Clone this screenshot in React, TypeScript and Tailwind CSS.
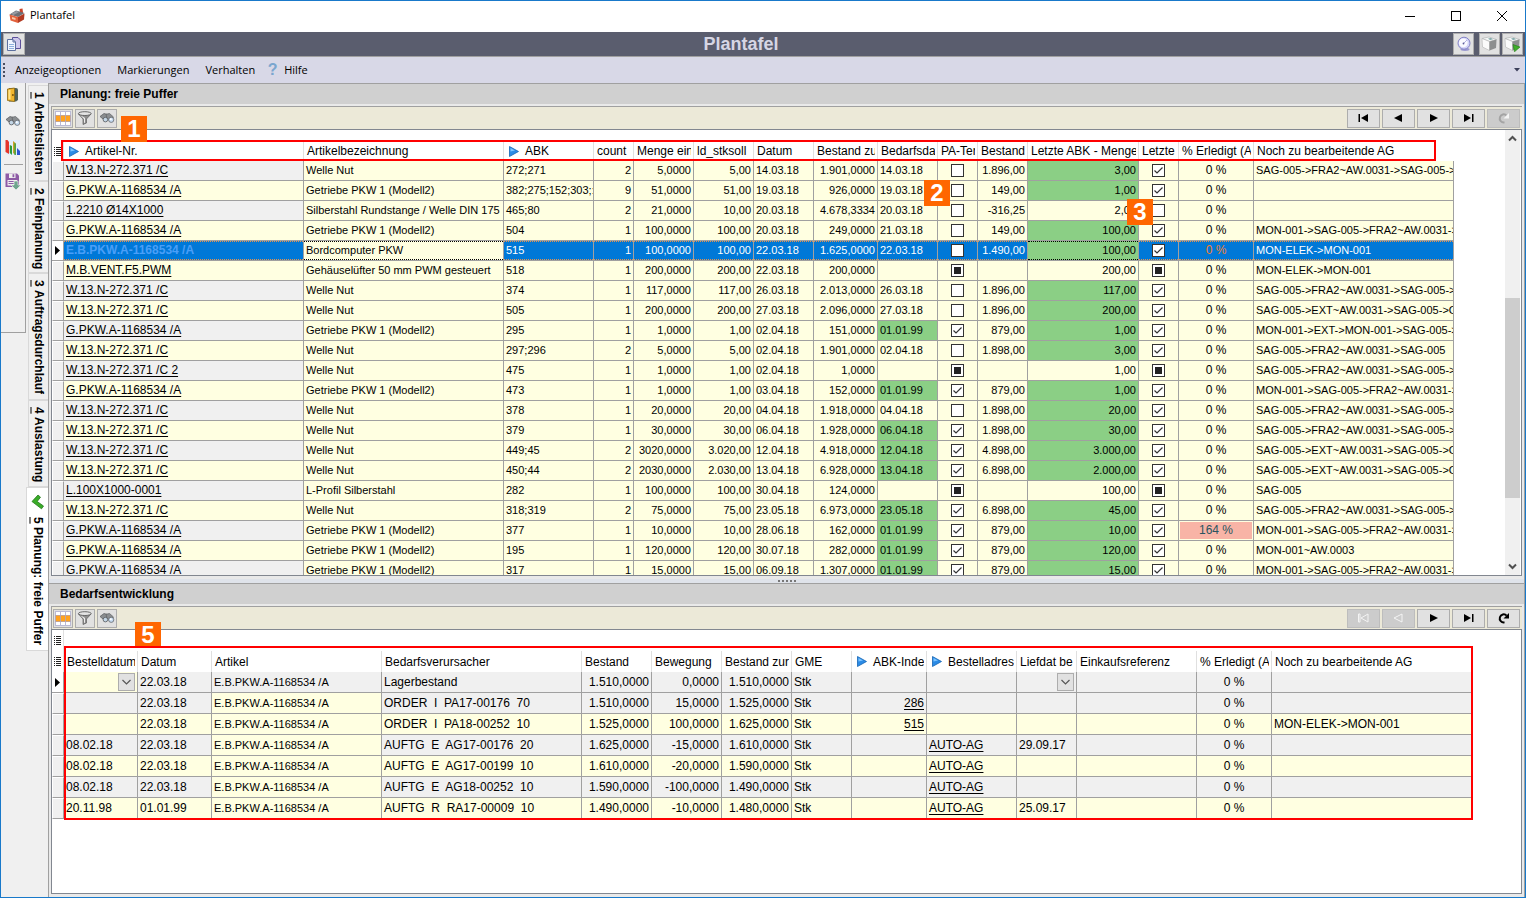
import type { ReactNode } from "react";
import clsx from "clsx";

type CheckState = "on" | "off" | "mixed";

type BufferRow = {
  item: string;
  name: string;
  abk: string;
  count: string;
  unitQty: string;
  target: string;
  date: string;
  stockAt: string;
  demand: string;
  demandHit?: boolean;
  pa: CheckState;
  stock: string;
  lastQty: string;
  last: CheckState;
  done: string;
  ops: string;
};

const NUT = "W.13.N-272.371 /C";
const GEAR = "G.PKW.A-1168534 /A";
const GEAR_NAME = "Getriebe PKW 1 (Modell2)";
const FRA = "SAG-005->FRA2~AW.0031->SAG-005->";
const EXT = "SAG-005->EXT~AW.0031->SAG-005->G";
const MON = "MON-001->SAG-005->FRA2~AW.0031->";

const BUFFER_ROWS: BufferRow[] = [
  { item: NUT, name: "Welle Nut", abk: "272;271", count: "2", unitQty: "5,0000", target: "5,00", date: "14.03.18", stockAt: "1.901,0000", demand: "14.03.18", pa: "off", stock: "1.896,00", lastQty: "3,00", last: "on", done: "0 %", ops: FRA },
  { item: GEAR, name: GEAR_NAME, abk: "382;275;152;303;:", count: "9", unitQty: "51,0000", target: "51,00", date: "19.03.18", stockAt: "926,0000", demand: "19.03.18", pa: "off", stock: "149,00", lastQty: "1,00", last: "on", done: "0 %", ops: "" },
  { item: "1.2210 Ø14X1000", name: "Silberstahl Rundstange / Welle DIN 175", abk: "465;80", count: "2", unitQty: "21,0000", target: "10,00", date: "20.03.18", stockAt: "4.678,3334", demand: "20.03.18", pa: "off", stock: "-316,25", lastQty: "2,00", last: "off", done: "0 %", ops: "" },
  { item: GEAR, name: GEAR_NAME, abk: "504", count: "1", unitQty: "100,0000", target: "100,00", date: "20.03.18", stockAt: "249,0000", demand: "21.03.18", pa: "off", stock: "149,00", lastQty: "100,00", last: "on", done: "0 %", ops: MON },
  { item: "E.B.PKW.A-1168534 /A", name: "Bordcomputer PKW", abk: "515", count: "1", unitQty: "100,0000", target: "100,00", date: "22.03.18", stockAt: "1.625,0000", demand: "22.03.18", pa: "off", stock: "1.490,00", lastQty: "100,00", last: "on", done: "0 %", ops: "MON-ELEK->MON-001" },
  { item: "M.B.VENT.F5.PWM", name: "Gehäuselüfter 50 mm PWM gesteuert", abk: "518", count: "1", unitQty: "200,0000", target: "200,00", date: "22.03.18", stockAt: "200,0000", demand: "", pa: "mixed", stock: "", lastQty: "200,00", last: "mixed", done: "0 %", ops: "MON-ELEK->MON-001" },
  { item: NUT, name: "Welle Nut", abk: "374", count: "1", unitQty: "117,0000", target: "117,00", date: "26.03.18", stockAt: "2.013,0000", demand: "26.03.18", pa: "off", stock: "1.896,00", lastQty: "117,00", last: "on", done: "0 %", ops: FRA },
  { item: NUT, name: "Welle Nut", abk: "505", count: "1", unitQty: "200,0000", target: "200,00", date: "27.03.18", stockAt: "2.096,0000", demand: "27.03.18", pa: "off", stock: "1.896,00", lastQty: "200,00", last: "on", done: "0 %", ops: EXT },
  { item: GEAR, name: GEAR_NAME, abk: "295", count: "1", unitQty: "1,0000", target: "1,00", date: "02.04.18", stockAt: "151,0000", demand: "01.01.99", demandHit: true, pa: "on", stock: "879,00", lastQty: "1,00", last: "on", done: "0 %", ops: "MON-001->EXT->MON-001->SAG-005->" },
  { item: NUT, name: "Welle Nut", abk: "297;296", count: "2", unitQty: "5,0000", target: "5,00", date: "02.04.18", stockAt: "1.901,0000", demand: "02.04.18", pa: "off", stock: "1.898,00", lastQty: "3,00", last: "on", done: "0 %", ops: "SAG-005->FRA2~AW.0031->SAG-005" },
  { item: "W.13.N-272.371 /C 2", name: "Welle Nut", abk: "475", count: "1", unitQty: "1,0000", target: "1,00", date: "02.04.18", stockAt: "1,0000", demand: "", pa: "mixed", stock: "", lastQty: "1,00", last: "mixed", done: "0 %", ops: FRA },
  { item: GEAR, name: GEAR_NAME, abk: "473", count: "1", unitQty: "1,0000", target: "1,00", date: "03.04.18", stockAt: "152,0000", demand: "01.01.99", demandHit: true, pa: "on", stock: "879,00", lastQty: "1,00", last: "on", done: "0 %", ops: MON },
  { item: NUT, name: "Welle Nut", abk: "378", count: "1", unitQty: "20,0000", target: "20,00", date: "04.04.18", stockAt: "1.918,0000", demand: "04.04.18", pa: "off", stock: "1.898,00", lastQty: "20,00", last: "on", done: "0 %", ops: FRA },
  { item: NUT, name: "Welle Nut", abk: "379", count: "1", unitQty: "30,0000", target: "30,00", date: "06.04.18", stockAt: "1.928,0000", demand: "06.04.18", demandHit: true, pa: "on", stock: "1.898,00", lastQty: "30,00", last: "on", done: "0 %", ops: FRA },
  { item: NUT, name: "Welle Nut", abk: "449;45", count: "2", unitQty: "3020,0000", target: "3.020,00", date: "12.04.18", stockAt: "4.918,0000", demand: "12.04.18", demandHit: true, pa: "on", stock: "4.898,00", lastQty: "3.000,00", last: "on", done: "0 %", ops: EXT },
  { item: NUT, name: "Welle Nut", abk: "450;44", count: "2", unitQty: "2030,0000", target: "2.030,00", date: "13.04.18", stockAt: "6.928,0000", demand: "13.04.18", demandHit: true, pa: "on", stock: "6.898,00", lastQty: "2.000,00", last: "on", done: "0 %", ops: EXT },
  { item: "L.100X1000-0001", name: "L-Profil Silberstahl", abk: "282", count: "1", unitQty: "100,0000", target: "100,00", date: "30.04.18", stockAt: "124,0000", demand: "", pa: "mixed", stock: "", lastQty: "100,00", last: "mixed", done: "0 %", ops: "SAG-005" },
  { item: NUT, name: "Welle Nut", abk: "318;319", count: "2", unitQty: "75,0000", target: "75,00", date: "23.05.18", stockAt: "6.973,0000", demand: "23.05.18", demandHit: true, pa: "on", stock: "6.898,00", lastQty: "45,00", last: "on", done: "0 %", ops: FRA },
  { item: GEAR, name: GEAR_NAME, abk: "377", count: "1", unitQty: "10,0000", target: "10,00", date: "28.06.18", stockAt: "162,0000", demand: "01.01.99", demandHit: true, pa: "on", stock: "879,00", lastQty: "10,00", last: "on", done: "164 %", ops: MON },
  { item: GEAR, name: GEAR_NAME, abk: "195", count: "1", unitQty: "120,0000", target: "120,00", date: "30.07.18", stockAt: "282,0000", demand: "01.01.99", demandHit: true, pa: "on", stock: "879,00", lastQty: "120,00", last: "on", done: "0 %", ops: "MON-001~AW.0003" },
  { item: GEAR, name: GEAR_NAME, abk: "317", count: "1", unitQty: "15,0000", target: "15,00", date: "06.09.18", stockAt: "1.307,0000", demand: "01.01.99", demandHit: true, pa: "on", stock: "879,00", lastQty: "15,00", last: "on", done: "0 %", ops: MON },
];

type Column = { label: string; width: string; arrow?: boolean };

const BUFFER_COLUMNS: Column[] = [
  { label: "Artikel-Nr.", width: "w-[240px]", arrow: true },
  { label: "Artikelbezeichnung", width: "w-[200px]" },
  { label: "ABK", width: "w-[90px]", arrow: true },
  { label: "count", width: "w-[40px]" },
  { label: "Menge ein", width: "w-[60px]" },
  { label: "ld_stksoll", width: "w-[60px]" },
  { label: "Datum", width: "w-[60px]" },
  { label: "Bestand zu", width: "w-[64px]" },
  { label: "Bedarfsda", width: "w-[60px]" },
  { label: "PA-Ter", width: "w-[40px]" },
  { label: "Bestand", width: "w-[50px]" },
  { label: "Letzte ABK - Menge", width: "w-[111px]" },
  { label: "Letzte", width: "w-[40px]" },
  { label: "% Erledigt (A", width: "w-[75px]" },
  { label: "Noch zu bearbeitende AG", width: "w-[200px]" },
];

const DEMAND_COLUMNS: Column[] = [
  { label: "Bestelldatum", width: "w-[74px]" },
  { label: "Datum", width: "w-[74px]" },
  { label: "Artikel", width: "w-[170px]" },
  { label: "Bedarfsverursacher", width: "w-[200px]" },
  { label: "Bestand", width: "w-[70px]" },
  { label: "Bewegung", width: "w-[70px]" },
  { label: "Bestand zur", width: "w-[70px]" },
  { label: "GME", width: "w-[60px]" },
  { label: "ABK-Inde", width: "w-[75px]", arrow: true },
  { label: "Bestelladres", width: "w-[90px]", arrow: true },
  { label: "Liefdat be", width: "w-[60px]" },
  { label: "Einkaufsreferenz", width: "w-[120px]" },
  { label: "% Erledigt (A", width: "w-[75px]" },
  { label: "Noch zu bearbeitende AG", width: "w-[200px]" },
];

type DemandRow = {
  ordered: string;
  date: string;
  cause: string;
  before: string;
  move: string;
  after: string;
  abk?: string;
  address?: string;
  delivery?: string;
  ops?: string;
  gray?: boolean;
};

const DEMAND_ROWS: DemandRow[] = [
  { ordered: "", date: "22.03.18", cause: "Lagerbestand", before: "1.510,0000", move: "0,0000", after: "1.510,0000", gray: true },
  { ordered: "", date: "22.03.18", cause: "ORDER  I  PA17-00176  70", before: "1.510,0000", move: "15,0000", after: "1.525,0000", abk: "286", gray: true },
  { ordered: "", date: "22.03.18", cause: "ORDER  I  PA18-00252  10", before: "1.525,0000", move: "100,0000", after: "1.625,0000", abk: "515", ops: "MON-ELEK->MON-001" },
  { ordered: "08.02.18", date: "22.03.18", cause: "AUFTG  E  AG17-00176  20", before: "1.625,0000", move: "-15,0000", after: "1.610,0000", address: "AUTO-AG", delivery: "29.09.17", gray: true },
  { ordered: "08.02.18", date: "22.03.18", cause: "AUFTG  E  AG17-00199  10", before: "1.610,0000", move: "-20,0000", after: "1.590,0000", address: "AUTO-AG" },
  { ordered: "08.02.18", date: "22.03.18", cause: "AUFTG  E  AG18-00252  10", before: "1.590,0000", move: "-100,0000", after: "1.490,0000", address: "AUTO-AG", gray: true },
  { ordered: "20.11.98", date: "01.01.99", cause: "AUFTG  R  RA17-00009  10", before: "1.490,0000", move: "-10,0000", after: "1.480,0000", address: "AUTO-AG", delivery: "25.09.17" },
];

/* ---------- icons ---------- */

function PlayIcon() {
  return (
    <svg width="10" height="11" viewBox="0 0 10 11" className="shrink-0">
      <path d="M0.5 0.5 L9.5 5.5 L0.5 10.5 Z" fill="#2b8be6" stroke="#1464b4" strokeWidth="0.8" />
      <path d="M1.5 2 L6 4.6 L1.5 5.5 Z" fill="#7cc4ff" />
    </svg>
  );
}

function ListIcon() {
  return (
    <svg width="7" height="9" viewBox="0 0 7 9" shapeRendering="crispEdges">
      <path d="M0 0.5h1M2 0.5h5M0 2.5h1M2 2.5h5M0 4.5h1M2 4.5h5M0 6.5h1M2 6.5h5M0 8.5h1M2 8.5h5" stroke="#222" />
    </svg>
  );
}

function RowMarker() {
  return (
    <svg width="5" height="9" viewBox="0 0 5 9" className="mx-auto">
      <path d="M0 0 L5 4.5 L0 9 Z" fill="#000" />
    </svg>
  );
}

function FactoryIcon() {
  return (
    <svg width="16" height="16" viewBox="0 0 16 16">
      <path d="M10.5 1 L13.5 0.5 L14.2 6 L11 6 Z" fill="#c9442a" />
      <path d="M0.5 6.5 L7 2.5 L15.5 5 L9 9 Z" fill="#6d7077" />
      <path d="M2 5.8 L7.5 3 L10 4 L4.5 7 Z" fill="#979ba2" />
      <path d="M0.5 6.5 L9 9 L9 15 L1.5 12.5 Z" fill="#e2613c" />
      <path d="M9 9 L15.5 5.5 L15 11.5 L9 15 Z" fill="#b23a22" />
      <path d="M3 9 L6.5 10 L6.5 12 L3 11 Z" fill="#f9c9a8" />
    </svg>
  );
}

function PagesIcon() {
  return (
    <svg width="16" height="16" viewBox="0 0 16 16">
      <path d="M6.5 1.5 H12 L14.5 4 V12.5 H6.5 Z" fill="#cfc8ec" stroke="#5c4f9a" />
      <path d="M1.5 3.5 H7 L9.5 6 V14.5 H1.5 Z" fill="#f2f6ff" stroke="#5c6f9e" />
      <path d="M7 3.5 V6 H9.5" fill="none" stroke="#5c6f9e" />
      <path d="M3 8.5 H8 M3 10.5 H8 M3 12.5 H8" stroke="#8fb0dd" />
    </svg>
  );
}

function GlobeIcon() {
  return (
    <svg width="16" height="16" viewBox="0 0 16 16">
      <ellipse cx="9" cy="13.3" rx="4.5" ry="1.6" fill="#9a98cf" />
      <circle cx="8" cy="7.2" r="6" fill="#d3d4f8" stroke="#8583c6" />
      <circle cx="7.3" cy="6.8" r="4.4" fill="#fafaff" />
      <path d="M7.5 7.5 L11 4" stroke="#b3b2e0" />
      <circle cx="7.5" cy="7.5" r="0.9" fill="#5c5b98" />
    </svg>
  );
}

function CubeIcon({ green }: { green?: boolean }) {
  return (
    <svg width="17" height="16" viewBox="0 0 17 16">
      <path d="M1 2.5 L8 1 L15.5 3.5 L8.5 5.5 Z" fill="#f4f7f7" stroke="#a9adad" strokeWidth="0.6" />
      <path d="M1 2.5 L8.5 5.5 L8.5 14.5 L1.5 11 Z" fill="#fbfbfb" stroke="#b4b4b4" strokeWidth="0.6" />
      <path d="M8.5 5.5 L15.5 3.5 L15 12 L8.5 14.5 Z" fill="#8d8f8f" />
      <path d="M7 2.5 L10 2 L12 3.2 L9 4 Z" fill="#7fa8a8" />
      {green && <path d="M9 8.5 L16 11 L10.5 15.8 Z" fill="#3fae2a" stroke="#217a14" strokeWidth="0.6" />}
    </svg>
  );
}

function GridIcon() {
  return (
    <svg width="16" height="15" viewBox="0 0 16 15" shapeRendering="crispEdges">
      <rect width="16" height="15" fill="#fff" />
      <rect y="5" width="16" height="5" fill="#ffa21f" />
      <path d="M0 4.5H16 M0 10.5H16" stroke="#c9a487" />
      <path d="M0.5 0V15 M5.5 0V15 M10.5 0V15 M15.5 0V15 M0 14.5H16 M0 0.5H16" stroke="#a9a9c9" strokeOpacity="0.8" />
    </svg>
  );
}

function FunnelIcon() {
  return (
    <svg width="16" height="16" viewBox="0 0 16 16">
      <path d="M1.5 4 L6 9 V14.5 L9.5 13 V9 L14 4 Z" fill="#8e8e8e" stroke="#5e5e5e" strokeWidth="0.7" />
      <path d="M3 5 L7 9 V13 L8 12.6 V8 Z" fill="#efefef" />
      <ellipse cx="7.8" cy="3.6" rx="6.4" ry="1.9" fill="#e4e4e4" stroke="#5b5b5b" strokeWidth="0.9" />
    </svg>
  );
}

function BinocularsIcon() {
  return (
    <svg width="16" height="12" viewBox="0 0 16 12">
      <path d="M1 4.5 L5 1.5 L8.5 2.5 L7 8 L4 7 Z" fill="#8a8d90" stroke="#55585b" strokeWidth="0.7" />
      <path d="M7 2.3 L10.5 1.5 L14.5 5 L11 9.5 L8 6 Z" fill="#8b8e91" stroke="#606366" strokeWidth="0.7" />
      <circle cx="6.4" cy="7.6" r="2.3" fill="#c3d6e6" stroke="#54585c" strokeWidth="0.8" />
      <circle cx="12.2" cy="7.8" r="2.6" fill="#c6dcf2" stroke="#64686c" strokeWidth="0.8" />
      <circle cx="11.8" cy="7.2" r="1" fill="#fff" />
    </svg>
  );
}

function DoorIcon() {
  return (
    <svg width="14" height="16" viewBox="0 0 14 16">
      <path d="M3 1 H10 Q12 1 12 3 V13 L10 14.5 H3 Z" fill="#4f6158" />
      <path d="M1.5 2 L8.5 1 V14.5 L1.5 13.5 Z" fill="#f0b62e" stroke="#8f6912" strokeWidth="0.8" />
      <path d="M2.5 3 L4.5 2.8 V12.5 L2.5 12.2 Z" fill="#ffe28a" />
      <circle cx="6.9" cy="8" r="0.9" fill="#6b4c06" />
    </svg>
  );
}

function ChartIcon() {
  return (
    <svg width="16" height="17" viewBox="0 0 16 17">
      <rect x="1" y="1" width="14" height="15" fill="#e3eefb" />
      <path d="M0.5 1 H2.5 L4 3 V15 L0.5 13 Z" fill="#e5352b" />
      <path d="M4.8 6 L7 7 V16 L4.8 14 Z" fill="#2c9c3c" />
      <path d="M8 2 L10.5 4 V16 L8 14 Z" fill="#c9a32a" />
      <path d="M9.5 4 L10.8 4.5 V16 H9.5 Z" fill="#2c9c3c" />
      <path d="M12 9 L15 12 V16 H12 Z" fill="#2f55d0" />
    </svg>
  );
}

function SaveIcon() {
  return (
    <svg width="16" height="17" viewBox="0 0 16 17">
      <path d="M0.5 0.5 H12 L14 2.5 V14 H0.5 Z" fill="#8e5ba6" />
      <rect x="4" y="0.5" width="6.5" height="4.5" fill="#f0f0f0" />
      <rect x="7.5" y="1.2" width="1.8" height="3" fill="#8e5ba6" />
      <rect x="2.5" y="7" width="9.5" height="5.5" fill="#f0f0f0" />
      <path d="M3.5 8.5 H11 M3.5 10.5 H11" stroke="#8e5ba6" />
      <path d="M9 8 H13 V12 H16 L11 17 L6 12 H9 Z" fill="#6fa58e" stroke="#f0f0f0" strokeWidth="0.7" />
    </svg>
  );
}

function TabMark() {
  return (
    <svg width="14" height="16" viewBox="0 0 14 16">
      <path d="M1 7.5 L7 1 L9.5 3.2 L6.2 7.5 L12.5 12 L10.5 14.8 Z" fill="#3aac28" stroke="#23791a" strokeWidth="0.8" />
    </svg>
  );
}

const NAV_PATHS = {
  first: "M0.5 1 H2 V9 H0.5 Z M10 1 V9 L3 5 Z",
  prev: "M9 1 V9 L1 5 Z",
  next: "M2 1 V9 L10 5 Z",
  last: "M9 1 H10.5 V9 H9 Z M1 1 V9 L8 5 Z",
};

type NavKind = keyof typeof NAV_PATHS | "reload";

const NAV_LABELS: Record<NavKind, string> = {
  first: "Erster Datensatz",
  prev: "Vorheriger Datensatz",
  next: "Nächster Datensatz",
  last: "Letzter Datensatz",
  reload: "Aktualisieren",
};

function NavButton({ kind, disabled }: { kind: NavKind; disabled?: boolean }) {
  const ink = disabled ? "#f4f4f4" : "#000";
  return (
    <button
      aria-label={NAV_LABELS[kind]}
      disabled={disabled}
      className={clsx(
        "grid h-[19px] w-[33px] place-items-center border",
        disabled ? "border-[#bdbdbd] bg-[#cccccc]" : "border-[#adadad] bg-[#e1e1e1]",
      )}
    >
      {kind === "reload" ? (
        <svg width="12" height="12" viewBox="0 0 12 12" fill="none">
          <path d="M6.5 10.3 A4 4 0 1 1 8.6 3.6" stroke={disabled ? "#a4a4a4" : ink} strokeWidth="2" />
          <path d="M11 1 V6.5 H5.5 Z" fill={ink} />
        </svg>
      ) : (
        <svg width="11" height="10" viewBox="0 0 11 10">
          <path d={NAV_PATHS[kind]} fill={disabled ? "#cccccc" : ink} stroke={disabled ? ink : "none"} />
        </svg>
      )}
    </button>
  );
}

/* ---------- grid parts ---------- */

function CheckCell({ state, label }: { state: CheckState; label: string }) {
  return (
    <span className="grid h-full place-items-center">
      <input
        type="checkbox"
        aria-label={label}
        defaultChecked={state === "on"}
        ref={(el) => {
          if (el) el.indeterminate = state === "mixed";
        }}
        className="h-[13px] w-[13px] appearance-none border border-[#333] bg-white [grid-area:1/1]"
      />
      {state === "on" && (
        <svg width="11" height="11" viewBox="0 0 11 11" className="pointer-events-none [grid-area:1/1]">
          <path d="M1.5 5.5 L4 8 L9.5 2.5" fill="none" stroke="#333" strokeWidth="1.2" />
        </svg>
      )}
      {state === "mixed" && <span className="pointer-events-none h-[7px] w-[7px] bg-[#222] [grid-area:1/1]" />}
    </span>
  );
}

function Cell({
  children,
  bg = "bg-[#ffffe1]",
  align = "text-left",
  inner,
  tall,
}: {
  children?: ReactNode;
  bg?: string;
  align?: string;
  inner?: string;
  tall?: boolean;
}) {
  return (
    <td className={clsx("border-r border-b border-[#a0a0a0] p-0", bg, align)}>
      <div
        className={clsx(
          "overflow-hidden pr-0.5 pl-0.5 whitespace-pre",
          tall ? "h-5 leading-5" : "h-[19px]",
          inner ?? (tall ? "" : "leading-[19px]"),
        )}
      >
        {children}
      </div>
    </td>
  );
}

function RowHead({ current, tall }: { current?: boolean; tall?: boolean }) {
  return (
    <th
      scope="row"
      className={clsx(
        "border-r border-b border-[#a0a0a0] p-0",
        tall ? "h-[21px]" : "h-5",
        current ? "bg-white" : "border-t border-l border-t-white border-l-white bg-[#f0f0f0]",
      )}
    >
      {current && <RowMarker />}
    </th>
  );
}

function GridHead({ columns, height }: { columns: Column[]; height: string }) {
  return (
    <>
      <colgroup>
        <col className="w-3" />
        {columns.map((c) => (
          <col key={c.label} className={c.width} />
        ))}
      </colgroup>
      <thead>
        <tr className={height}>
          <th className="border-r border-[#e0e0e0] p-0">
            <span className="grid place-items-center">
              <ListIcon />
            </span>
          </th>
          {columns.map((c) => (
            <th
              key={c.label}
              scope="col"
              className="border-r border-[#e0e0e0] p-0 text-left text-xs font-normal last:border-transparent"
            >
              <div
                className={clsx(
                  "flex items-center overflow-hidden border-r-2 border-transparent whitespace-nowrap",
                  c.arrow ? "gap-1.5 pl-[5px]" : "pl-[3px]",
                )}
              >
                {c.arrow && <PlayIcon />}
                {c.label}
              </div>
            </th>
          ))}
        </tr>
      </thead>
    </>
  );
}

function BufferTable() {
  return (
    <table className="w-[1402px] table-fixed border-separate border-spacing-0 text-[11px]">
      <GridHead columns={BUFFER_COLUMNS} height="h-5" />
      <tbody>
        {BUFFER_ROWS.map((r, i) => {
          const current = r.abk === "515";
          const plain = current ? "bg-[#0078d7] text-white" : "bg-[#ffffe1]";
          const edge = current ? "border-y border-dotted border-y-[#e8924a] leading-[17px]" : undefined;
          const focusEdge = current ? "border-y border-dotted border-y-black leading-[17px]" : undefined;
          return (
            <tr key={i}>
              <RowHead current={current} />
              <Cell bg={current ? "bg-[#0078d7]" : i % 2 ? "bg-[#ffffe1]" : "bg-[#f0f0f0]"} inner={edge}>
                <a
                  href="#"
                  className={clsx(
                    "text-xs",
                    current ? "leading-[17px] font-bold text-[#4a9ff8]" : "leading-[19px] underline underline-offset-2",
                  )}
                >
                  {r.item}
                </a>
              </Cell>
              <Cell inner={focusEdge}>{r.name}</Cell>
              <Cell bg={plain} inner={edge}>{r.abk}</Cell>
              <Cell bg={plain} inner={edge} align="text-right">{r.count}</Cell>
              <Cell bg={plain} inner={edge} align="text-right">{r.unitQty}</Cell>
              <Cell bg={plain} inner={edge} align="text-right">{r.target}</Cell>
              <Cell bg={plain} inner={edge}>{r.date}</Cell>
              <Cell bg={plain} inner={edge} align="text-right">{r.stockAt}</Cell>
              <Cell bg={r.demandHit ? "bg-[#8bcf85]" : plain} inner={edge}>{r.demand}</Cell>
              <Cell bg={plain} inner={edge}>
                <CheckCell state={r.pa} label="PA-Termin" />
              </Cell>
              <Cell bg={plain} inner={edge} align="text-right">{r.stock}</Cell>
              <Cell bg={r.stock && r.last !== "off" ? "bg-[#8bcf85]" : "bg-[#ffffe1]"} inner={focusEdge} align="text-right">
                {r.lastQty}
              </Cell>
              <Cell bg={plain} inner={edge}>
                <CheckCell state={r.last} label="Letzte" />
              </Cell>
              {r.done === "164 %" ? (
                <td className="border-r border-b border-[#a0a0a0] bg-[#ffffe1] p-px">
                  <div className="h-[17px] bg-[#f8b4a6] text-center text-xs leading-[17px] text-[#2a5560]">{r.done}</div>
                </td>
              ) : (
                <Cell bg={plain} inner={edge} align="text-center">
                  <span className={clsx("text-xs", current ? "leading-[17px] text-[#f08030]" : "leading-[19px]")}>{r.done}</span>
                </Cell>
              )}
              <Cell bg={plain} inner={edge}>{r.ops}</Cell>
            </tr>
          );
        })}
      </tbody>
    </table>
  );
}

function DatePick({ label }: { label: string }) {
  return (
    <span className="flex h-full items-center justify-end">
      <select aria-label={label} className="h-[18px] w-[17px] appearance-none border border-[#adadad] bg-[#e1e1e1]" />
      <svg width="17" height="10" viewBox="0 0 17 10" className="pointer-events-none -ml-[17px]">
        <path d="M4.5 3 L8.5 7 L12.5 3" fill="none" stroke="#555" strokeWidth="1.2" />
      </svg>
    </span>
  );
}

function DemandTable() {
  return (
    <table className="w-[1420px] table-fixed border-separate border-spacing-0 text-xs">
      <GridHead columns={DEMAND_COLUMNS} height="h-[21px]" />
      <tbody>
        {DEMAND_ROWS.map((r, i) => {
          const bg = r.gray ? "bg-[#f0f0f0]" : "bg-[#ffffe1]";
          return (
            <tr key={r.cause}>
              <RowHead tall current={i === 0} />
              <Cell tall bg={i === 0 ? "bg-[#ffffe1]" : bg}>{i === 0 ? <DatePick label="Bestelldatum" /> : r.ordered}</Cell>
              <Cell tall bg={bg}>{r.date}</Cell>
              <Cell tall bg={i === 0 ? bg : "bg-[#ffffe1]"}>
                <span className="text-[11px]">E.B.PKW.A-1168534 /A</span>
              </Cell>
              <Cell tall bg={bg}>{r.cause}</Cell>
              <Cell tall bg={bg} align="text-right">{r.before}</Cell>
              <Cell tall bg={bg} align="text-right">{r.move}</Cell>
              <Cell tall bg={bg} align="text-right">{r.after}</Cell>
              <Cell tall bg={bg}>Stk</Cell>
              <Cell tall bg={bg} align="text-right">
                {r.abk && <a href="#" className="underline underline-offset-2">{r.abk}</a>}
              </Cell>
              <Cell tall bg={bg}>
                {r.address && <a href="#" className="underline underline-offset-2">{r.address}</a>}
              </Cell>
              <Cell tall bg={bg}>{i === 0 ? <DatePick label="Liefdat" /> : r.delivery}</Cell>
              <Cell tall bg={bg} />
              <Cell tall bg={bg} align="text-center">0 %</Cell>
              <Cell tall bg={bg}>{r.ops}</Cell>
            </tr>
          );
        })}
      </tbody>
    </table>
  );
}

function Badge({ children, className }: { children: ReactNode; className: string }) {
  return (
    <span className={clsx("absolute h-[26px] w-[26px] bg-[#ff6600] text-center text-2xl leading-[26px] font-bold text-white", className)}>
      {children}
    </span>
  );
}

/* ---------- frame ---------- */

function ToolButton({ label, children }: { label: string; children: ReactNode }) {
  return (
    <button aria-label={label} className="grid h-[19px] w-5 place-items-center border border-[#adadad] bg-[#e1e1e1]">
      {children}
    </button>
  );
}

function PanelHead({ title, disabled }: { title: string; disabled: NavKind[] }) {
  const kinds: NavKind[] = ["first", "prev", "next", "last", "reload"];
  return (
    <>
      <h2 className="-mx-0.5 h-5 bg-[#d0d0d0] pl-[11px] text-xs leading-5 font-bold">{title}</h2>
      <div className="mt-0.5 flex h-[23px] items-center gap-0.5 border-t border-l border-[#a0a0a0] bg-[#ece9d8] px-px">
        <ToolButton label="Spalten"><GridIcon /></ToolButton>
        <ToolButton label="Filter"><FunnelIcon /></ToolButton>
        <ToolButton label="Suchen"><BinocularsIcon /></ToolButton>
        <div className="ml-auto flex gap-0.5 pr-px">
          {kinds.map((k) => (
            <NavButton key={k} kind={k} disabled={disabled.includes(k)} />
          ))}
        </div>
      </div>
    </>
  );
}

function ScrollBar() {
  return (
    <div className="flex w-[15px] shrink-0 flex-col bg-[#f0f0f0]">
      <button aria-label="Nach oben" className="grid h-[17px] place-items-center">
        <svg width="9" height="7" viewBox="0 0 9 7"><path d="M1 5.5 L4.5 2 L8 5.5" fill="none" stroke="#505050" strokeWidth="2" /></svg>
      </button>
      <div className="grow-[151]" />
      <div className="grow-[200] bg-[#cdcdcd]" />
      <div className="grow-[60]" />
      <button aria-label="Nach unten" className="grid h-[17px] place-items-center">
        <svg width="9" height="7" viewBox="0 0 9 7"><path d="M1 1.5 L4.5 5 L8 1.5" fill="none" stroke="#505050" strokeWidth="2" /></svg>
      </button>
    </div>
  );
}

const TABS = [
  { key: "1", label: "Arbeitslisten", height: "h-24" },
  { key: "2", label: "Feinplanung", height: "h-[92px]" },
  { key: "3", label: "Auftragsdurchlauf", height: "h-[127px]" },
  { key: "4", label: "Auslastung", height: "h-[87px]" },
  { key: "5", label: "Planung: freie Puffer", height: "h-[164px]", active: true },
];

function SideTabs() {
  return (
    <nav className="flex w-[22px] shrink-0 flex-col items-end pt-0.5">
      {TABS.map((t) => (
        <button
          key={t.key}
          className={clsx(
            "flex items-center border border-r-0 border-[#d9d9d9] pt-1.5 text-xs font-bold whitespace-pre [writing-mode:vertical-rl]",
            t.height,
            t.active ? "w-[22px] gap-[7px] bg-white" : "w-5 bg-[#f0f0f0]",
          )}
        >
          {t.active && <TabMark />}
          <span>
            <u>{t.key}</u> {t.label}
          </span>
        </button>
      ))}
    </nav>
  );
}

export default function App() {
  return (
    <div className="flex h-screen min-h-[700px] flex-col overflow-hidden border border-[#1979ca] bg-[#f0f0f0] font-['Liberation_Sans',Arial,sans-serif] text-black">
      <header className="flex h-[31px] shrink-0 items-center bg-white pb-0.5 pl-2">
        <FactoryIcon />
        <h1 className="ml-[5px] font-['Open_Sans','Noto_Sans',sans-serif] text-[11px]">Plantafel</h1>
        <div className="ml-auto flex">
          <button aria-label="Minimieren" className="grid h-[29px] w-[46px] place-items-center">
            <svg width="10" height="10" viewBox="0 0 10 10" shapeRendering="crispEdges"><path d="M0 5.5H10" stroke="#000" /></svg>
          </button>
          <button aria-label="Maximieren" className="grid h-[29px] w-[46px] place-items-center">
            <svg width="10" height="10" viewBox="0 0 10 10" shapeRendering="crispEdges"><rect x="0.5" y="0.5" width="9" height="9" fill="none" stroke="#000" /></svg>
          </button>
          <button aria-label="Schließen" className="grid h-[29px] w-[46px] place-items-center">
            <svg width="10" height="10" viewBox="0 0 10 10"><path d="M0 0L10 10M10 0L0 10" stroke="#000" /></svg>
          </button>
        </div>
      </header>

      <div className="flex h-[25px] shrink-0 items-center border-b border-[#a0a0a0] bg-[#5a5d6e] px-0.5">
        <button aria-label="Fenster" className="grid h-[22px] w-[22px] place-items-center border border-[#adadad] bg-[#e1e1e1]"><PagesIcon /></button>
        <p className="flex-1 pl-1 text-center text-lg leading-6 font-bold text-[#d6d6e4]">Plantafel</p>
        <button aria-label="Web" className="grid h-[22px] w-[21px] place-items-center border border-[#adadad] bg-[#e1e1e1]"><GlobeIcon /></button>
        <button aria-label="Modul" className="ml-[5px] grid h-[22px] w-[21px] place-items-center border border-[#adadad] bg-[#e1e1e1]"><CubeIcon /></button>
        <button aria-label="Modul starten" className="ml-0.5 grid h-[22px] w-[21px] place-items-center border border-[#adadad] bg-[#e1e1e1]"><CubeIcon green /></button>
      </div>

      <nav className="flex h-[26px] shrink-0 items-center gap-4 bg-[#d8d8e7] pr-[5px] pl-0.5 font-['Open_Sans','Noto_Sans',sans-serif] text-[11px]">
        <svg width="2" height="14" viewBox="0 0 2 14" className="-mr-1.5" shapeRendering="crispEdges"><path d="M1 0V14" stroke="#4a4d5e" strokeWidth="2" strokeDasharray="2 2" /></svg>
        <button>Anzeigeoptionen</button>
        <button>Markierungen</button>
        <button>Verhalten</button>
        <button className="-ml-1 flex items-center gap-1.5">
          <span className="w-[11px] text-center font-['Liberation_Sans',sans-serif] text-base leading-5 font-bold text-[#7ba6cf]">?</span>
          Hilfe
        </button>
        <svg width="6" height="4" viewBox="0 0 6 4" className="ml-auto"><path d="M0 0H6L3 3.5Z" fill="#3c3f5a" /></svg>
      </nav>

      <div className="flex min-h-0 flex-1">
        <aside className="flex h-[250px] w-[25px] shrink-0 flex-col items-center border-r border-b border-[#a0a0a0] pt-1">
          <button aria-label="Beenden"><DoorIcon /></button>
          <button aria-label="Suchen" className="mt-3"><BinocularsIcon /></button>
          <button aria-label="Diagramm" className="mt-3"><ChartIcon /></button>
          <hr className="my-2 w-[19px] border-[#a0a0a0]" />
          <button aria-label="Speichern"><SaveIcon /></button>
        </aside>
        <SideTabs />

        <main className="flex min-w-0 flex-1 flex-col border-x border-[#a0a0a0] bg-[#e9e9e9]">
          <section className="border-t border-[#a0a0a0] px-0.5 pb-[3px]">
            <PanelHead title="Planung: freie Puffer" disabled={["reload"]} />
            <div className="relative">
              <div className="flex h-[447px] overflow-hidden border border-[#828790] bg-white">
                <div className="min-w-0 flex-1 overflow-hidden pt-[11px]">
                  <BufferTable />
                </div>
                <ScrollBar />
                <div className="w-px shrink-0" />
              </div>
              <div className="absolute top-[11px] left-[10px] h-[21px] w-[1375px] border-2 border-[#ff0000]" />
              <Badge className="-top-[13px] left-[70px]">1</Badge>
              <Badge className="top-[51px] left-[873px]">2</Badge>
              <Badge className="top-[70px] left-[1076px]">3</Badge>
            </div>
          </section>

          <div className="grid h-1 place-items-center bg-[#dfe3ea]">
            <svg width="18" height="2" viewBox="0 0 18 2" shapeRendering="crispEdges"><path d="M0 1H18" stroke="#777" strokeWidth="2" strokeDasharray="2 2" /></svg>
          </div>

          <section className="flex min-h-0 flex-1 flex-col border-t border-[#a0a0a0] px-0.5 pb-[3px]">
            <PanelHead title="Bedarfsentwicklung" disabled={["first", "prev"]} />
            <div className="relative flex min-h-0 flex-1 flex-col">
              <div className="flex-1 overflow-hidden border border-[#828790] bg-white">
                <div className="flex h-[21px] w-3 items-center justify-center border-r border-[#e0e0e0]">
                  <ListIcon />
                </div>
                <DemandTable />
              </div>
              <Badge className="-top-[7px] left-[84px]">5</Badge>
              <div className="absolute top-[17px] left-[13px] h-[174px] w-[1409px] border-2 border-[#ff0000]" />
            </div>
          </section>
        </main>
      </div>
    </div>
  );
}
